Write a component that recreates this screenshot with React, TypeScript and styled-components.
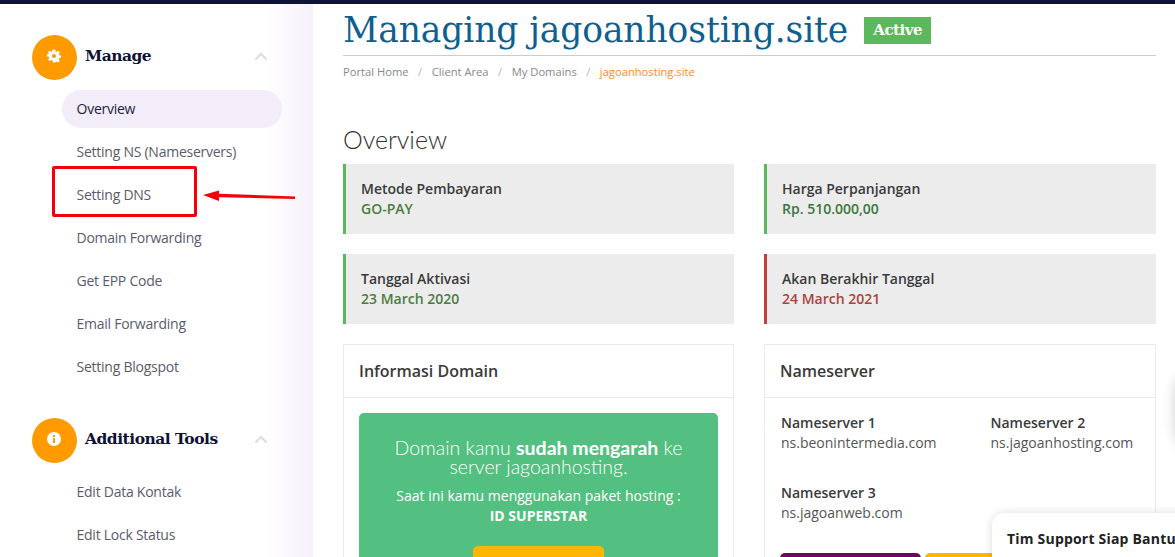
import React from "react";
import styled, { createGlobalStyle } from "styled-components";

const Global = createGlobalStyle`
  html, body { margin: 0; padding: 0; height: 557px; overflow: hidden; background: #fff; }
  body { font-family: "Open Sans", "Liberation Sans", sans-serif; font-size: 14px; color: #333; }
  * { box-sizing: border-box; }
`;

const Page = styled.div`
  position: relative;
  width: 1175px;
  height: 557px;
  overflow: hidden;
  display: flex;
  flex-direction: column;
`;
const TopBar = styled.div`
  height: 4px;
  flex: none;
  background: #0e1236;
`;
const Body = styled.div`
  flex: 1;
  min-height: 0;
  display: flex;
`;
const Sidebar = styled.aside`
  width: 313px;
  flex: none;
  padding: 31px 31px 0 32px;
  background: linear-gradient(90deg, #fff 0%, #fff 84%, #f6f1fa 100%);
`;
const SectionHead = styled.div<{ $mt?: number }>`
  display: flex;
  align-items: center;
  height: 45px;
  margin-top: ${(p) => p.$mt ?? 0}px;
`;
const Badge = styled.span`
  width: 45px;
  height: 45px;
  border-radius: 50%;
  background: #ff9b00;
  display: flex;
  align-items: center;
  justify-content: center;
  flex: none;
`;
const BadgeIcon = styled.svg`
  margin: -3px 2px 0 0;
`;
const SectionTitle = styled.span`
  margin-left: 8px;
  margin-top: -5px;
  flex: 1;
  font-family: "DejaVu Serif", serif;
  font-weight: 700;
  font-size: 15.5px;
  letter-spacing: -0.5px;
  color: #0e1236;
`;
const Chevron = styled.svg`
  width: 14px;
  height: 9px;
  margin-right: 14px;
  margin-top: -3px;
`;
const Menu = styled.nav<{ $mt: number }>`
  margin: ${(p) => p.$mt}px 0 0 30px;
  display: flex;
  flex-direction: column;
  gap: 5px;
`;
const MenuItem = styled.a<{ $active?: boolean }>`
  position: relative;
  height: 38px;
  display: flex;
  align-items: center;
  padding: 0 0 2px 14.5px;
  border-radius: 19px;
  font-size: 14px;
  letter-spacing: -0.25px;
  color: ${(p) => (p.$active ? "#1b1d3d" : "#5b5b6b")};
  background: ${(p) => (p.$active ? "#f2edf8" : "transparent")};
`;
const RedBox = styled.span`
  position: absolute;
  left: -10px;
  top: -10px;
  width: 145px;
  height: 51px;
  border: 3px solid #f5000a;
  border-radius: 2px;
`;
const Arrow = styled.svg`
  position: absolute;
  left: 141px;
  top: 13px;
  width: 94px;
  height: 16px;
`;

const Main = styled.main`
  flex: 1;
  min-width: 0;
  padding: 0 19px 0 30px;
`;
const TitleRow = styled.div`
  height: 52px;
  display: flex;
  align-items: center;
  gap: 16px;
  border-bottom: 1px solid #ccc;
`;
const Title = styled.h1`
  margin: 0;
  font-family: "DejaVu Serif", serif;
  font-weight: 400;
  font-size: 34.5px;
  letter-spacing: -0.1px;
  white-space: nowrap;
  color: #0f5f8f;
  line-height: 46px;
`;
const Status = styled.span`
  height: 27px;
  width: 67px;
  margin-top: 2px;
  text-align: center;
  background: #5cb85c;
  color: #fff;
  font-family: "DejaVu Serif", serif;
  font-weight: 700;
  font-size: 15px;
  letter-spacing: -0.5px;
  line-height: 26px;
`;
const Crumbs = styled.div`
  height: 31px;
  display: flex;
  align-items: center;
  font-size: 11.2px;
  color: #888;
`;
const Sep = styled.span`
  margin: 0 9.5px;
  color: #b5b5b5;
`;
const Current = styled.span`
  color: #ff8a1e;
`;
const SectionHeading = styled.h2`
  margin: 39px 0 11px;
  font-family: Lato, "Liberation Sans", sans-serif;
  font-weight: 300;
  font-size: 25px;
  line-height: 27px;
  color: #333;
`;
const Grid = styled.div`
  display: grid;
  grid-template-columns: 391px 392px;
  column-gap: 30px;
  row-gap: 20px;
`;
const Info = styled.div<{ $bar: string }>`
  height: 70px;
  background: #ececec;
  border-left: 3px solid ${(p) => p.$bar};
  padding: 15px 0 0 15px;
  line-height: 20px;
  font-weight: 600;
`;
const InfoLabel = styled.div`
  color: #3a3a3a;
`;
const InfoValue = styled.div<{ $c: string }>`
  color: ${(p) => p.$c};
`;
const Panel = styled.section`
  height: 300px;
  border: 1px solid #eaeaea;
`;
const PanelHead = styled.div`
  height: 53px;
  padding-left: 15px;
  border-bottom: 1px solid #eaeaea;
  display: flex;
  align-items: center;
  font-size: 16px;
  font-weight: 600;
  color: #3a3a3a;
`;
const Promo = styled.div`
  margin: 15px 15px 0;
  height: 260px;
  border-radius: 5px;
  background: #53bf80;
  color: #fff;
  text-align: center;
  padding-top: 25px;
`;
const PromoHead = styled.div`
  font-family: Lato, "Liberation Sans", sans-serif;
  font-weight: 300;
  font-size: 19.5px;
  line-height: 19px;
  b { font-weight: 700; }
`;
const PromoText = styled.div`
  margin-top: 9px;
  font-size: 14px;
  line-height: 21px;
`;
const PromoStrong = styled.div`
  font-size: 14px;
  line-height: 20px;
  font-weight: 700;
`;
const PromoButton = styled.div`
  width: 131px;
  height: 40px;
  margin: 20px auto 0;
  background: #ffb600;
  border-radius: 5px;
`;
const NsGrid = styled.div`
  display: grid;
  grid-template-columns: 209.5px 1fr;
  row-gap: 30px;
  padding: 15px 16px 0;
  line-height: 20px;
`;
const NsLabel = styled.div`
  font-weight: 600;
  color: #3a3a3a;
`;
const NsValue = styled.div`
  color: #555;
`;
const Buttons = styled.div`
  display: flex;
  gap: 4px;
  padding: 30px 15px 0;
`;
const Btn = styled.div<{ $bg: string }>`
  width: 141px;
  height: 40px;
  background: ${(p) => p.$bg};
  border-radius: 5px;
`;
const Chat = styled.div`
  position: absolute;
  left: 992px;
  top: 513px;
  width: 220px;
  height: 80px;
  background: #fff;
  border-radius: 12px 0 0 0;
  box-shadow: 0 0 10px rgba(0,0,0,.14);
  padding: 17px 0 0 15px;
  font-size: 14px;
  font-weight: 700;
  letter-spacing: 0.2px;
  color: #222;
  white-space: nowrap;
  line-height: 18px;
`;
const EdgeShadow = styled.div`
  position: absolute;
  left: 1180px;
  top: 380px;
  width: 20px;
  height: 60px;
  border-radius: 10px;
  box-shadow: 0 0 14px 4px rgba(0,0,0,.22);
`;

const Up = () => (
  <Chevron viewBox="0 0 14 9" fill="none">
    <path d="M1.5 7.5 7 2l5.5 5.5" stroke="#dfdfdf" strokeWidth="2.4" />
  </Chevron>
);

export default function App() {
  return (
    <Page>
      <Global />
      <TopBar />
      <Body>
        <Sidebar>
          <SectionHead>
            <Badge>
              <BadgeIcon width="14" height="14" viewBox="0 0 24 24" fill="#fff">
                <path fillRule="evenodd" d="M10 1h4l.6 3.200 1.900.8 2.700-1.800 2.800 2.800-1.800 2.700.8 1.900 3 .6v4l-3 .6-.8 1.900 1.800 2.700-2.800 2.800-2.700-1.800-1.900.8L14 23h-4l-.6-3.200-1.900-.8-2.700 1.800-2.800-2.800 1.800-2.700-.8-1.900-3-.6v-4l3-.6.8-1.900L1 5.900l2.800-2.800 2.700 1.800 1.900-.8zM12 8.500a3.500 3.500 0 1 0 0 7 3.500 3.500 0 0 0 0-7z" />
              </BadgeIcon>
            </Badge>
            <SectionTitle>Manage</SectionTitle>
            <Up />
          </SectionHead>
          <Menu $mt={10}>
            <MenuItem $active>Overview</MenuItem>
            <MenuItem>Setting NS (Nameservers)</MenuItem>
            <MenuItem>
              Setting DNS
              <RedBox />
              <Arrow viewBox="0 0 94 16" fill="none">
                <path d="M0 6 16 1.500v3.300l76 2.700v2.400L16 8.200v3.700z" fill="#f5000a" />
              </Arrow>
            </MenuItem>
            <MenuItem>Domain Forwarding</MenuItem>
            <MenuItem>Get EPP Code</MenuItem>
            <MenuItem>Email Forwarding</MenuItem>
            <MenuItem>Setting Blogspot</MenuItem>
          </Menu>
          <SectionHead $mt={32}>
            <Badge>
              <BadgeIcon width="14" height="14" viewBox="0 0 14 14">
                <circle cx="7" cy="7" r="7" fill="#fff" />
                <rect x="6" y="6" width="2" height="5" fill="#ff9b00" />
                <rect x="6" y="3" width="2" height="2" fill="#ff9b00" />
              </BadgeIcon>
            </Badge>
            <SectionTitle>Additional Tools</SectionTitle>
            <Up />
          </SectionHead>
          <Menu $mt={10}>
            <MenuItem>Edit Data Kontak</MenuItem>
            <MenuItem>Edit Lock Status</MenuItem>
          </Menu>
        </Sidebar>
        <Main>
          <TitleRow>
            <Title>Managing jagoanhosting.site</Title>
            <Status>Active</Status>
          </TitleRow>
          <Crumbs>
            Portal Home<Sep>/</Sep>Client Area<Sep>/</Sep>My Domains<Sep>/</Sep>
            <Current>jagoanhosting.site</Current>
          </Crumbs>
          <SectionHeading>Overview</SectionHeading>
          <Grid>
            <Info $bar="#5cb85c">
              <InfoLabel>Metode Pembayaran</InfoLabel>
              <InfoValue $c="#4d7c3f">GO-PAY</InfoValue>
            </Info>
            <Info $bar="#5cb85c">
              <InfoLabel>Harga Perpanjangan</InfoLabel>
              <InfoValue $c="#3c763d">Rp. 510.000,00</InfoValue>
            </Info>
            <Info $bar="#5cb85c">
              <InfoLabel>Tanggal Aktivasi</InfoLabel>
              <InfoValue $c="#4d7c3f">23 March 2020</InfoValue>
            </Info>
            <Info $bar="#c04040">
              <InfoLabel>Akan Berakhir Tanggal</InfoLabel>
              <InfoValue $c="#a94442">24 March 2021</InfoValue>
            </Info>
            <Panel>
              <PanelHead>Informasi Domain</PanelHead>
              <Promo>
                <PromoHead>
                  Domain kamu <b>sudah mengarah</b> ke
                  <br />
                  server jagoanhosting.
                </PromoHead>
                <PromoText>Saat ini kamu menggunakan paket hosting :</PromoText>
                <PromoStrong>ID SUPERSTAR</PromoStrong>
                <PromoButton />
              </Promo>
            </Panel>
            <Panel>
              <PanelHead>Nameserver</PanelHead>
              <NsGrid>
                <div>
                  <NsLabel>Nameserver 1</NsLabel>
                  <NsValue>ns.beonintermedia.com</NsValue>
                </div>
                <div>
                  <NsLabel>Nameserver 2</NsLabel>
                  <NsValue>ns.jagoanhosting.com</NsValue>
                </div>
                <div>
                  <NsLabel>Nameserver 3</NsLabel>
                  <NsValue>ns.jagoanweb.com</NsValue>
                </div>
              </NsGrid>
              <Buttons>
                <Btn $bg="#6b0a5c" />
                <Btn $bg="#ffb600" />
              </Buttons>
            </Panel>
          </Grid>
        </Main>
      </Body>
      <EdgeShadow />
      <Chat>Tim Support Siap Bantu</Chat>
    </Page>
  );
}
